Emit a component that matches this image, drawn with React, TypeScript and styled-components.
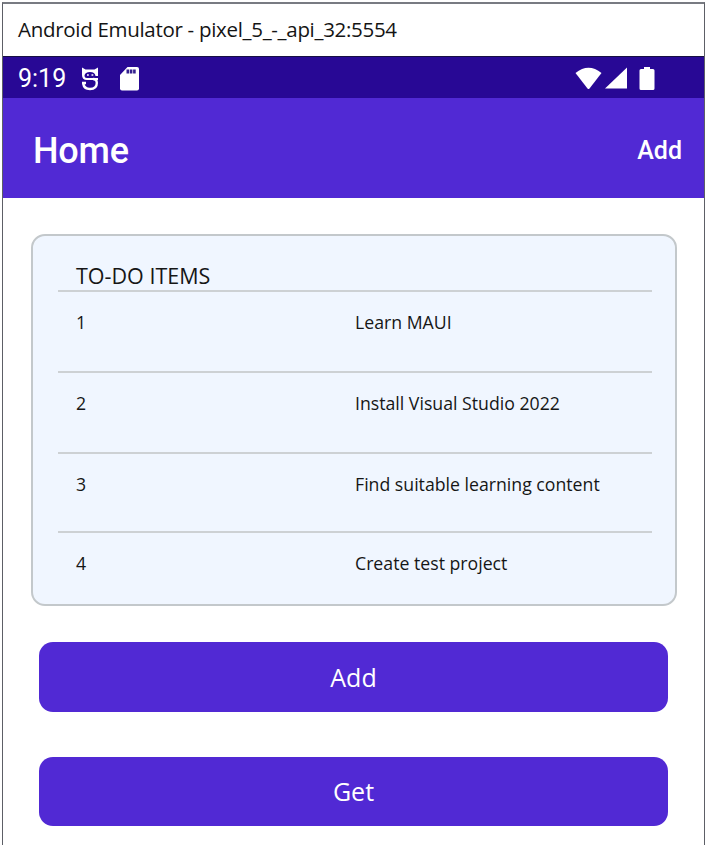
import React from "react";
import styled, { createGlobalStyle } from "styled-components";

const GlobalStyle = createGlobalStyle`
  *, *::before, *::after { box-sizing: border-box; }
  html, body { margin: 0; background: #ffffff; }
  body { width: 709px; height: 849px; overflow: hidden; }
`;

const Page = styled.div`
  height: 849px;
  padding: 2px 4px 4px 2px;
  background: #fff;
`;

const Window = styled.div`
  width: 703px;
  height: 843px;
  display: flex;
  flex-direction: column;
  border: 1px solid #5d5f66;
  border-top: 2px solid #787b82;
  border-bottom: 0;
  background: #fff;
`;

const TitleBar = styled.div`
  height: 53px;
  flex: none;
  display: flex;
  align-items: center;
  padding: 0 15px 2px;
  border-bottom: 1px solid #171044;
  font: 400 20.5px/28px "Open Sans", sans-serif;
  letter-spacing: -0.3px;
  color: #141414;
  white-space: nowrap;
`;

const StatusBar = styled.div`
  height: 41px;
  flex: none;
  display: flex;
  align-items: center;
  justify-content: space-between;
  padding: 2px 49px 0 15px;
  background: #280895;
  color: #fff;
`;

const StatusGroup = styled.div<{ $gap: number }>`
  display: flex;
  align-items: center;
  gap: ${(p) => p.$gap}px;
`;

const Clock = styled.span`
  width: 50px;
  padding-top: 1px;
  font: 400 25px/30px Roboto, sans-serif;
  white-space: nowrap;
`;

const AppBar = styled.header`
  height: 100px;
  flex: none;
  display: flex;
  align-items: center;
  justify-content: space-between;
  padding: 6px 22px 0 30px;
  background: #5129d4;
  color: #fff;
`;

const AppTitle = styled.h1`
  margin: 0;
  font: 500 36px/44px Roboto, sans-serif;
  letter-spacing: -0.2px;
`;

const AppAction = styled.button`
  padding: 0;
  border: 0;
  background: none;
  color: inherit;
  font: 500 25px/30px Roboto, sans-serif;
`;

const Content = styled.main`
  display: flex;
  flex-direction: column;
  padding: 36px 27px 0 28px;
`;

const Card = styled.section`
  height: 372px;
  padding: 0 23px 0 25px;
  border: 2px solid #c3c8cb;
  border-radius: 14px;
  background: #f0f6ff;
  font-family: "Open Sans", sans-serif;
  color: #161616;
`;

const CardTitle = styled.h2`
  height: 54px;
  margin: 0;
  padding: 26px 18px 0;
  font-size: 21.5px;
  line-height: 28px;
  font-weight: 400;
`;

const Row = styled.div<{ $height: number }>`
  height: ${(p) => p.$height}px;
  display: grid;
  grid-template-columns: 279px 1fr;
  padding: 18px 0 0 18px;
  border-top: 2px solid #cdd1d4;
  font-size: 17.7px;
  line-height: 24px;
  white-space: nowrap;
`;

const Actions = styled.div`
  display: flex;
  flex-direction: column;
  gap: 45px;
  padding: 36px 9px 0 8px;
`;

const ActionButton = styled.button<{ $height: number }>`
  height: ${(p) => p.$height}px;
  padding: 0 0 1px;
  border: 0;
  border-radius: 14px;
  background: #5129d4;
  color: #fff;
  font: 400 25px/32px "Open Sans", sans-serif;
`;

const items = [
  { id: 1, text: "Learn MAUI", height: 81 },
  { id: 2, text: "Install Visual Studio 2022", height: 81 },
  { id: 3, text: "Find suitable learning content", height: 79 },
  { id: 4, text: "Create test project", height: 73 },
];

const DebugIcon = () => (
  <svg width="18" height="24" viewBox="0 0 18 24" fill="none">
    <path d="M1 .5l3.500 2h9l3.500-2V9h-2.500Q14 5 9 5T3.500 8.500Q3.500 11 6 11h11v2H6Q1 13 1 8z" fill="#fff" />
    <path d="M12 12q3.800 0 3.800 4 0 6-6.800 6-6 0-6.800-5.500M1 16h4" stroke="#fff" strokeWidth="2.400" />
    <path d="M6 8h1.800M10.500 8h1.800" stroke="#fff" strokeWidth="1.500" />
  </svg>
);

const SdCardIcon = () => (
  <svg width="20" height="24" viewBox="0 0 20 24">
    <path d="M7.500 0H17q2 0 2 2v19.500q0 2-2 2H2q-2 0-2-2V8z" fill="#fff" />
    <path d="M6.500 2.500h2.600v4H6.500zM9.800 2.500h2.600v4h-2.600zM13.100 2.500h2.600v4h-2.600z" fill="#34208f" />
  </svg>
);

const WifiIcon = () => (
  <svg width="27" height="23" viewBox="0 0 27 23">
    <path d="M.5 6Q13.500-4.500 26.500 6L14.500 21.500q-1 1-2 0z" fill="#fff" />
  </svg>
);

const SignalIcon = () => (
  <svg width="22" height="23" viewBox="0 0 22 23">
    <path d="M22 .5v21H0z" fill="#fff" />
  </svg>
);

const BatteryIcon = () => (
  <svg width="16" height="24" viewBox="0 0 16 24">
    <path d="M5 0h6v2h3q1.500 0 1.500 1.500v18q0 1.500-1.500 1.500H2Q.5 23 .5 21.500v-18Q.5 2 2 2h3z" fill="#fff" />
  </svg>
);

export default function App() {
  return (
    <Page>
      <GlobalStyle />
      <Window>
        <TitleBar>Android Emulator - pixel_5_-_api_32:5554</TitleBar>
        <StatusBar>
          <StatusGroup $gap={21}>
            <StatusGroup $gap={13}>
              <Clock>9:19</Clock>
              <DebugIcon />
            </StatusGroup>
            <SdCardIcon />
          </StatusGroup>
          <StatusGroup $gap={12}>
            <StatusGroup $gap={3}>
              <WifiIcon />
              <SignalIcon />
            </StatusGroup>
            <BatteryIcon />
          </StatusGroup>
        </StatusBar>
        <AppBar>
          <AppTitle>Home</AppTitle>
          <AppAction>Add</AppAction>
        </AppBar>
        <Content>
          <Card>
            <CardTitle>TO-DO ITEMS</CardTitle>
            {items.map((item) => (
              <Row key={item.id} $height={item.height}>
                <span>{item.id}</span>
                <span>{item.text}</span>
              </Row>
            ))}
          </Card>
          <Actions>
            <ActionButton $height={70}>Add</ActionButton>
            <ActionButton $height={69}>Get</ActionButton>
          </Actions>
        </Content>
      </Window>
    </Page>
  );
}
